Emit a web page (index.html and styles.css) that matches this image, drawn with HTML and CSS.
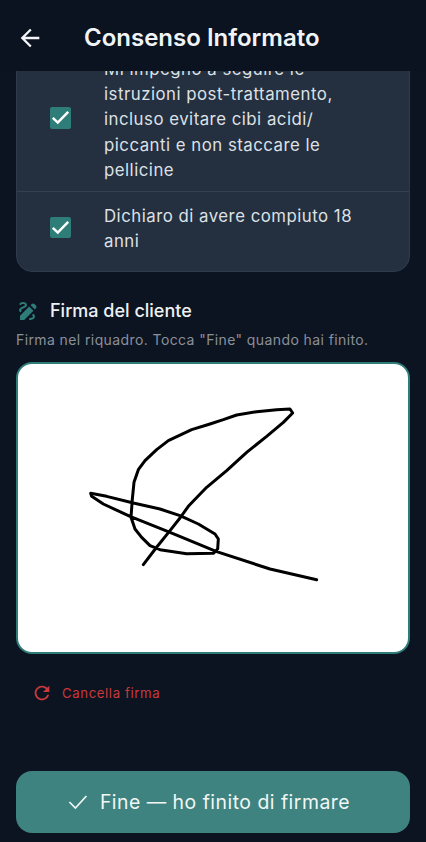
FILE: index.html
```html
<!DOCTYPE html>
<html lang="it">
<head>
<meta charset="utf-8">
<title>Consenso Informato</title>
<link rel="stylesheet" href="styles.css">
</head>
<body>
<div class="screen">
  <header class="appbar">
    <svg class="back" viewBox="0 0 24 24"><path d="M20 11H7.83l5.59-5.59L12 4l-8 8 8 8 1.41-1.41L7.83 13H20v-2z"/></svg>
    <h1 class="title">Consenso Informato</h1>
  </header>
  <main class="body">
    <section class="card">
      <div class="row row-first">
        <span class="checkbox"><svg viewBox="0 0 21.4 21.4"><path d="M2.8 10.8L7.8 15.6L18.2 5"/></svg></span>
        <p class="row-text">Mi impegno a seguire le istruzioni post-trattamento, incluso evitare cibi acidi/ piccanti e non staccare le pellicine</p>
      </div>
      <div class="row">
        <span class="checkbox"><svg viewBox="0 0 21.4 21.4"><path d="M2.8 10.8L7.8 15.6L18.2 5"/></svg></span>
        <p class="row-text">Dichiaro di avere compiuto 18 anni</p>
      </div>
    </section>
    <div class="sign-head">
      <svg class="sign-icon" viewBox="0 0 24 24"><path d="M18.85 10.39l1.06-1.06c.78-.78.78-2.05 0-2.83L18.5 5.09c-.78-.78-2.05-.78-2.83 0l-1.06 1.06 4.24 4.24zm-5.66-2.83L4 16.76V21h4.24l9.19-9.19-4.24-4.25zM19 17.5c0 2.19-2.54 3.5-5 3.5-.55 0-1-.45-1-1s.45-1 1-1c1.54 0 3-.73 3-1.5 0-.47-.48-.87-1.23-1.2l1.48-1.48c1.07.63 1.75 1.47 1.75 2.68zM4.58 13.35C3.61 12.79 3 12.06 3 11c0-1.8 1.89-2.63 3.56-3.36C7.59 7.18 9 6.56 9 6c0-.41-.78-1-2-1-1.26 0-1.8.61-1.83.64-.35.41-.98.46-1.4.12-.41-.33-.5-.94-.16-1.38C3.72 4.24 4.94 3 7 3s4 1.21 4 3c0 1.87-1.89 2.7-3.56 3.44C6.42 9.89 5 10.5 5 11c0 .31.43.6 1.07.86l-1.49 1.49z"/></svg>
      <h2 class="sign-title">Firma del cliente</h2>
    </div>
    <p class="sign-hint">Firma nel riquadro. Tocca "Fine" quando hai finito.</p>
    <div class="pad">
      <svg class="pad-ink" viewBox="-156 -105 1170 864"><path d="M220 497L258 447L300 395L330 357L355 322L410 265L470 215L530 160L590 112L640 70L668 42L660 30L620 32L560 38L500 48L460 62L420 75L365 92L295 125L260 152L225 185L205 212L192 250L187 300L183 355L195 390L215 415L240 440L270 452L350 464L430 463L443 450L445 420L435 405L385 375L330 350L270 330L190 312L110 292L62 283L65 292L100 315L180 352L300 400L440 458L600 510L740 542"/></svg>
    </div>
    <div class="clear">
      <svg class="clear-icon" viewBox="0 0 24 24"><path d="M17.65 6.35C16.2 4.9 14.21 4 12 4c-4.42 0-7.99 3.58-7.99 8s3.57 8 7.99 8c3.73 0 6.84-2.55 7.73-6h-2.08c-.82 2.33-3.04 4-5.65 4-3.31 0-6-2.69-6-6s2.69-6 6-6c1.66 0 3.14.69 4.22 1.78L13 11h7V4l-2.35 2.35z"/></svg>
      <span class="clear-text">Cancella firma</span>
    </div>
  </main>
  <footer class="foot">
    <button class="done" type="button">
      <svg class="done-icon" viewBox="0 0 24 24"><path d="M3.4 12L9.4 18L20.4 6"/></svg>
      <span>Fine — ho finito di firmare</span>
    </button>
  </footer>
</div>
</body>
</html>
```
FILE: styles.css
```css
* { box-sizing: border-box; }
html, body { margin: 0; height: 100%; }
body { background: #0d1421; font-family: Inter, "Noto Sans", sans-serif; overflow: hidden; }
.screen { height: 842px; display: flex; flex-direction: column; }
.appbar { height: 71px; flex: none; display: flex; align-items: center; padding: 5px 0 0 16px; background: #0b1220; }
.back { width: 28px; height: 28px; fill: #f3f5f7; flex: none; }
.title { margin: 0 0 0 40px; font-size: 24px; font-weight: 600; color: #f1f4f6; line-height: 1.2; }
.body { flex: 1; min-height: 0; overflow: hidden; padding: 0 16px; }
.card { margin-top: -27px; background: #242f3f; border: 1px solid #2f3b4b; border-radius: 16px; padding-bottom: 9px; }
.row { display: flex; align-items: center; padding: 10px 43px 10px 33px; gap: 32.6px; border-top: 1px solid #344050; }
.row-first { border-top: 0; }
.checkbox { width: 21.4px; height: 21.4px; flex: none; border-radius: 2px; background: #2e7d78; display: flex; }
.checkbox svg { width: 100%; height: 100%; fill: none; stroke: #fff; stroke-width: 2.5; }
.row-text { margin: 2px 0 -2px; font-size: 16.8px; line-height: 25.2px; letter-spacing: .5px; color: #dde1e6; }
.sign-head { display: flex; align-items: center; gap: 10px; margin-top: 27px; }
.sign-icon { width: 24px; height: 24px; fill: #2e7d78; flex: none; }
.sign-title { margin: 0; font-size: 18px; font-weight: 500; color: #eef1f4; line-height: 24px; }
.sign-hint { margin: 7px 0 0; font-size: 14px; line-height: 20px; letter-spacing: .4px; color: #8a909a; }
.pad { margin-top: 12px; height: 292px; background: #fff; border: 2.5px solid #2e7d78; border-radius: 16px; overflow: hidden; }
.pad-ink { display: block; width: 100%; height: 100%; }
.pad-ink path { fill: none; stroke: #000; stroke-width: 9; stroke-linecap: round; stroke-linejoin: round; }
.clear { display: flex; align-items: center; gap: 9px; margin-top: 28px; padding-left: 15px; }
.clear-icon { width: 22px; height: 22px; fill: #c9393b; flex: none; }
.clear-text { font-size: 13.2px; font-weight: 400; letter-spacing: .6px; line-height: 20px; color: #c9393b; }
.foot { flex: none; padding: 0 16px 9px; }
.done { width: 100%; height: 62px; border: 0; border-radius: 16px; background: #3e8380; color: #f2f7f6; display: flex; align-items: center; justify-content: center; gap: 10px; font-family: inherit; font-size: 19.4px; font-weight: 400; letter-spacing: .5px; padding: 0 10px 0 0; }
.done-icon { width: 24px; height: 24px; fill: none; stroke: #f2f7f6; stroke-width: 1.7; flex: none; }
```
